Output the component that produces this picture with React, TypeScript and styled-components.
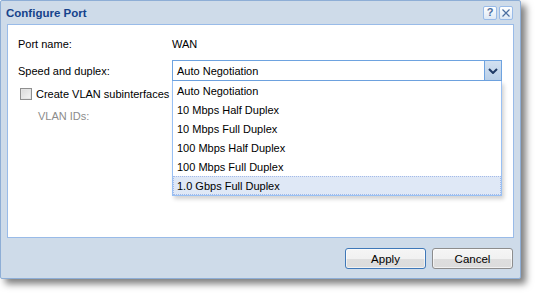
import React from "react";
import styled, { createGlobalStyle } from "styled-components";

const Global = createGlobalStyle`
  html, body { margin: 0; padding: 0; background: #ffffff; }
  body { font-family: "Liberation Sans", Arial, sans-serif; font-size: 11px; color: #000; }
  * { box-sizing: border-box; }
`;

const Page = styled.div`
  width: 535px;
  height: 295px;
  overflow: hidden;
`;

const Window = styled.div`
  width: 521px;
  height: 279px;
  background: #cedbe9;
  border: 1px solid #8eaed6;
  border-radius: 2px;
  box-shadow: 5px 5px 7px rgba(0, 0, 0, 0.5);
  display: flex;
  flex-direction: column;
`;

const TitleBar = styled.div`
  height: 23px;
  display: flex;
  align-items: center;
  justify-content: space-between;
  padding: 0 7px 0 5px;
`;

const Title = styled.div`
  font-weight: bold;
  font-size: 11.5px;
  color: #15428b;
`;

const Tools = styled.div`
  display: flex;
  gap: 2px;
`;

const ToolButton = styled.div`
  width: 14px;
  height: 14px;
  border: 1px solid #99bbe8;
  border-radius: 2px;
  background: linear-gradient(#ffffff, #dde8f5);
  display: flex;
  align-items: center;
  justify-content: center;
  color: #4a6ea0;
  font-weight: bold;
  font-size: 11px;
  line-height: 1;
`;

const Body = styled.div`
  margin: 0 6px;
  height: 214px;
  background: #ffffff;
  border: 1px solid #99bbe8;
  padding: 9px 0 0 10px;
  display: flex;
  flex-direction: column;
`;

const Row = styled.div<{ $h: number; $mt?: number }>`
  display: flex;
  align-items: center;
  height: ${(p) => p.$h}px;
  margin-top: ${(p) => p.$mt ?? 0}px;
`;

const Label = styled.div<{ $muted?: boolean; $indent?: number }>`
  width: 154px;
  padding-left: ${(p) => p.$indent ?? 0}px;
  color: ${(p) => (p.$muted ? "#8c8c8c" : "#000")};
  white-space: nowrap;
`;

const Value = styled.div``;

const SelectWrap = styled.div`
  position: relative;
  width: 330px;
  height: 21px;
`;

const SelectBox = styled.div`
  height: 21px;
  border: 1px solid #6ea3e0;
  display: flex;
  background: #fff;
`;

const SelectText = styled.div`
  flex: 1;
  padding-left: 4px;
  display: flex;
  align-items: center;
`;

const Trigger = styled.div`
  width: 17px;
  background: linear-gradient(#d3e1f1, #b9cfe8);
  border-left: 1px solid #6ea3e0;
  display: flex;
  align-items: center;
  justify-content: center;
`;

const List = styled.div`
  position: absolute;
  top: 21px;
  left: 0;
  width: 330px;
  background: #fff;
  border: 1px solid #98c0f4;
  border-top: none;
  box-shadow: 2px 3px 4px rgba(0, 0, 0, 0.18);
  z-index: 2;
`;

const Item = styled.div<{ $selected?: boolean }>`
  height: 19px;
  padding-left: 3px;
  display: flex;
  align-items: center;
  border: 1px dotted ${(p) => (p.$selected ? "#a3bae9" : "transparent")};
  background: ${(p) => (p.$selected ? "#dfe8f6" : "transparent")};
`;

const CheckRow = styled.div`
  display: flex;
  align-items: center;
  padding-left: 2px;
  gap: 4px;
  white-space: nowrap;
`;

const Check = styled.div`
  width: 12px;
  height: 12px;
  border: 1px solid #8f8f8f;
  background: linear-gradient(135deg, #d8d8d8, #f4f4f4);
  box-shadow: inset 0 0 0 1px #e4e4e4;
`;

const Footer = styled.div`
  display: flex;
  justify-content: flex-end;
  gap: 6px;
  padding: 10px 7px 0 0;
`;

const Button = styled.div<{ $primary?: boolean }>`
  width: 81px;
  height: 21px;
  border: 1px solid ${(p) => (p.$primary ? "#3f78b8" : "#8d8d8d")};
  border-radius: 3px;
  background: linear-gradient(#f5f5f5 0%, #f1f1f1 50%, #dedede 51%, #dcdcdc 100%);
  display: flex;
  align-items: center;
  justify-content: center;
  font-size: 11.5px;
  box-shadow: inset 0 0 0 1px rgba(255, 255, 255, 0.6);
`;

const options = [
  "Auto Negotiation",
  "10 Mbps Half Duplex",
  "10 Mbps Full Duplex",
  "100 Mbps Half Duplex",
  "100 Mbps Full Duplex",
  "1.0 Gbps Full Duplex",
];

export default function App() {
  return (
    <Page>
      <Global />
      <Window>
        <TitleBar>
          <Title>Configure Port</Title>
          <Tools>
            <ToolButton>?</ToolButton>
            <ToolButton>
              <svg width="8" height="8" viewBox="0 0 8 8">
                <path d="M0.5 0.5 L7.5 7.5 M7.5 0.5 L0.5 7.5" stroke="#4a6ea0" strokeWidth="1.2" />
              </svg>
            </ToolButton>
          </Tools>
        </TitleBar>
        <Body>
          <Row $h={20}>
            <Label>Port name:</Label>
            <Value>WAN</Value>
          </Row>
          <Row $h={21} $mt={6}>
            <Label>Speed and duplex:</Label>
            <SelectWrap>
              <SelectBox>
                <SelectText>Auto Negotiation</SelectText>
                <Trigger>
                  <svg width="10" height="6" viewBox="0 0 10 6">
                    <path d="M1 1 L5 5 L9 1" stroke="#1f3a66" strokeWidth="2" fill="none" />
                  </svg>
                </Trigger>
              </SelectBox>
              <List>
                {options.map((o, i) => (
                  <Item key={o} $selected={i === options.length - 1}>
                    {o}
                  </Item>
                ))}
              </List>
            </SelectWrap>
          </Row>
          <Row $h={20} $mt={3}>
            <CheckRow>
              <Check />
              Create VLAN subinterfaces
            </CheckRow>
          </Row>
          <Row $h={20} $mt={2}>
            <Label $muted $indent={20}>VLAN IDs:</Label>
          </Row>
        </Body>
        <Footer>
          <Button $primary>Apply</Button>
          <Button>Cancel</Button>
        </Footer>
      </Window>
    </Page>
  );
}
